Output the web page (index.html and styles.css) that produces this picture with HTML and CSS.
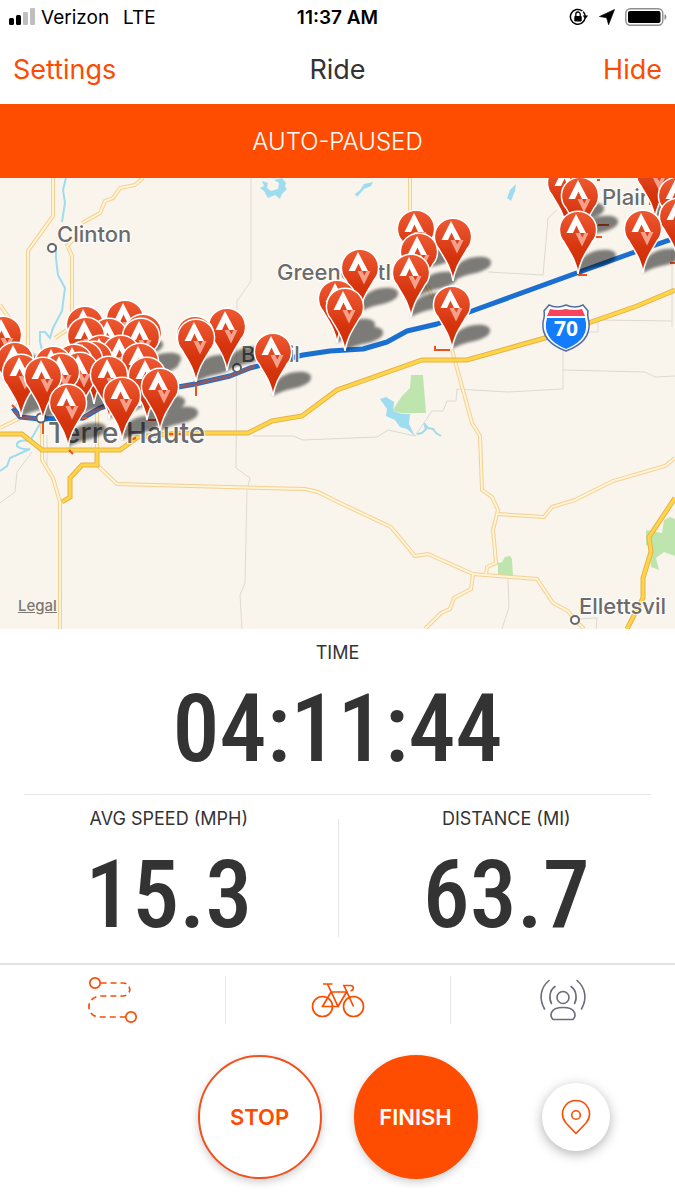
FILE: index.html
```html
<!DOCTYPE html>
<html lang="en">
<head>
  <meta charset="UTF-8">
  <meta name="viewport" content="width=device-width, initial-scale=1.0">
  <title>Ride</title>
  <link rel="stylesheet" href="styles.css">
</head>
<body>
  <div class="status-bar">
    <div class="carrier">
      <svg width="27" height="18" viewBox="0 0 27 18" aria-hidden="true">
        <rect x="1" y="10" width="5" height="7" rx="1.5"/>
        <rect x="8" y="7" width="5" height="10" rx="1.5"/>
        <rect x="15" y="4" width="5" height="13" rx="1" fill="#bfbfbf"/>
        <rect x="22" y="0" width="5" height="17" rx="1" fill="#bfbfbf"/>
      </svg>
      <span>Verizon</span>
      <span class="network">LTE</span>
    </div>
    <div class="clock">11:37 AM</div>
    <div class="status-icons">
      <svg width="20" height="18" viewBox="0 0 20 18" aria-hidden="true">
        <path d="M16.2 9.5A7.4 7.4 0 1 1 13.4 3" fill="none" stroke="#000" stroke-width="1.5"/>
        <path d="M14.2 3.8A7.4 7.4 0 0 1 16.3 8" fill="none" stroke="#000" stroke-width="1.5"/>
        <path d="M13.6 7.4h5.6l-2.8 3.6z"/>
        <rect x="5.3" y="8" width="7.4" height="5.4" rx="0.8"/>
        <path d="M6.8 8V6.2a2.2 2.2 0 0 1 4.4 0V8" fill="none" stroke="#000" stroke-width="1.3"/>
      </svg>
      <svg width="16" height="16" viewBox="0 0 16 16" aria-hidden="true">
        <path d="M15.6.4 9.6 15.800 7.600 8.800.4 7.500z" stroke="#000" stroke-width="0.6"/>
      </svg>
      <svg width="42" height="18" viewBox="0 0 42 18" aria-hidden="true">
        <rect x="0.8" y="0.8" width="37" height="16.4" rx="4.5" fill="none" stroke="#8e8e8e" stroke-width="1.4"/>
        <rect x="3" y="3" width="32.5" height="12" rx="2"/>
        <path d="M39.5 6v6q2-1 2-3t-2-3z" fill="#8e8e8e"/>
      </svg>
    </div>
  </div>

  <header class="nav">
    <a class="nav-link" href="#settings">Settings</a>
    <h1 class="nav-title">Ride</h1>
    <a class="nav-link nav-right" href="#hide">Hide</a>
  </header>

  <div class="banner">AUTO-PAUSED</div>

  <div class="map">
    <svg class="map-canvas" viewBox="0 178 675 451">
      <defs>
        <linearGradient id="pinFill" x1="0" y1="0" x2="0" y2="1">
          <stop offset="0" stop-color="#ee5a33"/>
          <stop offset="0.6" stop-color="#d6340d"/>
          <stop offset="1" stop-color="#cf2d05"/>
        </linearGradient>
        <filter id="soft" x="-10%" y="-10%" width="120%" height="120%">
          <feGaussianBlur stdDeviation="1.6"/>
        </filter>
        <g id="pin">
          <path d="M0 0C-2-14-8-21-14-32A18.6 18.6 0 1 1 14-32C8-21 2-14 0 0z" fill="url(#pinFill)" stroke="#fff" stroke-width="1.5"/>
          <path d="M-2-60 8-41H2L-1.5-48.500-5-41H-11.500z" fill="#fff"/>
          <path fill-rule="evenodd" d="M-2.500-41H10.500L4-27.500zM2-41 4.300-36.500 6.500-41z" fill="#f5a08a"/>
        </g>
        <path id="shadow" d="M0 0C1-8 2-17 12-21C21-25 37-26 38-19C39-13 28-9 18-7C10-5 5-3 0 0z"/>
      </defs>

      <!-- parks and water -->
      <g fill="#bfe5ae">
        <path d="M411 375h12l3 38h-24l-10-2 10-15 8-8z"/>
        <path d="M498 575v-12l4-1 3-5 5-1 2 3 1 17z"/>
        <path d="M646 530l16 3 2-13 6-3 5 2v37l-11-4-8 6 3 12-8-3-2-21-3-1z"/>
      </g>
      <g fill="#9edcf0">
        <path d="M380 399l6-2 8 5-1 9 9 3 8 0-1 10 6 12-8-7-7-2-5-7-9-4 1-7z"/>
        <path d="M262 181l6 2-1 5 4 3 7-2 1-6-5-3 8-2 4 5-1 4 2 2-5 5-2 5-5-4-7 3-4-7-4-3 4-2z"/>
        <path d="M355 194l5-4 4-6 9-2-2 4-7 3-7 8z"/>
        <path d="M507 198l3-8 6-6-1 7-4 10z"/>
      </g>
      <g class="river">
        <path d="M66 178l-3 12 2 13-3 19M56 245v13l2 17 7 13-3 23-9 17-3 10-5-6-5 0 0 10 2 8"/>
        <path d="M40 424l-10 17q-14-2-13 5 4 4 13 3l-20 9-3 8-7 5"/>
        <path d="M417 434l5-1 4-4-2-6 4 5 5 1 3 4 5 3"/>
      </g>

      <!-- county lines -->
      <g class="border">
        <path d="M251 178v103l-14 20-1 167 14 10-3 12-2 93-5 12 2 34"/>
        <path d="M253 436h40l10 4 74-3 11-7 27 6 17-25h11l4-10h9l1-12 51 3 55-3v-39M563 370l82 2 10 5 20-1"/>
        <path d="M590 332h8v-12l74 1M488 272l55 3 5-57 9-8M672 250v77"/>
        <path d="M508 579l1 28-7 22M577 619l20-1-1 11M32 452l-15 20-2 20-15 11M47 435v30"/>
      </g>

      <!-- secondary roads -->
      <g class="road-case">
        <path id="roads" d="M53 178v38L28 251v94M143 178l-8 7-15 3-7 10-8 3-5 12-18 10M68 247l4 9v74M67 330l-12 8M0 305l12 17M0 428l20-10M42 420v40l11 18 7 24v127M97 408v57l20 19 188 5 13 3 22 11 51 24 24 29 13-2 45 20 64 5 16 24 15 8 7 9 9 9M473 574l-2 15-17 9-4 11-9 4-16 16M452 350l20 73 8 13 2 54 10 7 6 13-5 20 3 33-9 4-1 8M498 514l46 3 8-10 23-7 38-19 52-15 10-8M410 178v37M427 285l6 13M66 247l8-8"/>
      </g>
      <use href="#roads" class="road-fill"/>

      <!-- highways -->
      <g class="highway-case">
        <path id="highways" d="M0 434h22l20 16h78l18-13 42-4h68l24-12 30-5 35-26 85-30h45l78-22 92-32 38-16M97 450v15H82L70 478v19l-8 5M675 498l-26 39 2 15-8 26v20l-16 31"/>
      </g>
      <use href="#highways" class="highway-fill"/>

      <!-- recorded route -->
      <path class="route" d="M13 408l7 9 20 2 43-1 17-10 50-16 45-8 35-8 20-8 53-13 27-4 33-2 24-7 20-11 30-7 35-13 160-58 43-15"/>
      <path class="route-overlap" d="M14 411l6 6 20 2M83 417l17-9 50-16 45-8 35-8 25-10"/>
      <path class="segment" d="M196 385v11M43 422v12M435 346v4h15M598 225h11M596 237h6M578 275h9M670 263h5M69 450l4 4M130 440l6-2M164 434h22M12 405l3 3M82 418h5M148 420h8M597 180h3"/>

      <g class="town">
        <circle cx="52" cy="248" r="4"/>
        <circle cx="41" cy="418" r="4.500"/>
        <circle cx="237" cy="368" r="4"/>
        <circle cx="575" cy="620" r="4"/>
      </g>

      <g class="town-name">
        <text x="57" y="242">Clinton</text>
        <text x="277" y="280">Greencastle</text>
        <text x="241" y="362">Brazil</text>
        <text x="602" y="205">Plain</text>
        <text x="579" y="614">Ellettsvil</text>
        <text x="48" y="443" class="city-name">Terre Haute</text>
      </g>

      <!-- interstate shield -->
      <g>
        <path d="M549 305q8 4 17 0 9 4 17 0l5 6q-1 4 1 11 2 20-23 29-25-9-23-29 2-7 1-11z" fill="#fff" stroke="#526da6" stroke-width="1.500"/>
        <path d="M550 309q8 2 16 0 8 2 16 0l3 7h-38z" fill="#f9435d"/>
        <path d="M547 318h38q6 21-19 31-25-10-19-31z" fill="#127cfa"/>
        <text x="566" y="336" class="shield-number">70</text>
      </g>

      <g id="shadows" filter="url(#soft)" fill="#000" opacity="0.5"></g>
      <g id="pins"></g>
    </svg>
    <a class="legal" href="#legal">Legal</a>
  </div>

  <main>
    <section class="stats">
      <div class="stat stat-time">
        <div class="stat-label">TIME</div>
        <div class="stat-value">04:11:44</div>
      </div>
      <div class="stat-row">
        <div class="stat">
          <div class="stat-label">AVG SPEED (MPH)</div>
          <div class="stat-value">15.3</div>
        </div>
        <div class="stat">
          <div class="stat-label">DISTANCE (MI)</div>
          <div class="stat-value">63.7</div>
        </div>
      </div>
    </section>

    <div class="tools">
      <button class="tool" aria-label="Routes">
        <svg width="52" height="48" viewBox="0 0 52 48" fill="none" stroke="currentColor" stroke-width="1.700">
          <circle cx="8" cy="7" r="5.200"/>
          <circle cx="44" cy="41" r="5.200"/>
          <path d="M13.500 7H36c9 0 9 13 0 13H14C-2 20-2 41 13 41h25.500" stroke-dasharray="6 4"/>
        </svg>
      </button>
      <button class="tool" aria-label="Sport">
        <svg width="54" height="36" viewBox="0 0 54 36" fill="none" stroke="currentColor" stroke-width="1.700">
          <circle cx="11.500" cy="24.500" r="10"/>
          <circle cx="42.500" cy="24.500" r="10"/>
          <path d="M12 2h9.500M16.500 2l10.500 22.500H11.500L20 10h15.500L27 24.500M42.500 24.500 33 3.500h6.500c4 0 3.500 5.500 0 5"/>
        </svg>
      </button>
      <button class="tool tool-muted" aria-label="Beacon">
        <svg width="48" height="42" viewBox="0 0 48 42" fill="none" stroke="currentColor" stroke-width="1.600" stroke-linecap="round">
          <circle cx="24" cy="18.500" r="6"/>
          <path d="M14 40.500h20c3-3 4-12-10-12s-13 9-10 12z"/>
          <path d="M16 7.500c-6 4-6 13-3.500 17M10 1.500C1 9 0 20 5.500 30M32 7.500c6 4 6 13 3.500 17M38 1.500c9 7.500 10 18.500 4.500 28.500"/>
        </svg>
      </button>
    </div>

    <div class="actions">
      <button class="round-button stop">STOP</button>
      <button class="round-button finish">FINISH</button>
      <button class="locate" aria-label="Show my location">
        <svg width="32" height="36" viewBox="0 0 32 36" fill="none" stroke="currentColor" stroke-width="1.600">
          <path d="M16 34.500 6 24C-2 14 5 1.500 16 1.500S34 14 26 24z" stroke-linejoin="round"/>
          <circle cx="16" cy="16" r="4.300"/>
        </svg>
      </button>
    </div>
  </main>

  <script src="script.js"></script>
</body>
</html>
```
FILE: styles.css
```css
* {
  box-sizing: border-box;
}
body {
  margin: 0;
  font-family: Inter, "Liberation Sans", sans-serif;
  color: #333;
  background-color: #fff;
}
button {
  padding: 0;
  border: none;
  background: none;
  font-family: inherit;
  color: #fc4c02;
  cursor: pointer;
}
svg {
  display: block;
}

/* Status bar */
.status-bar {
  display: grid;
  grid-template-columns: 1fr auto 1fr;
  align-items: center;
  height: 34px;
  padding: 0 8px;
  font-size: 19px;
  color: #000;
}
.carrier {
  display: flex;
  align-items: center;
  gap: 6px;
}
.network {
  margin-left: 8px;
}
.clock {
  font-weight: 600;
}
.status-icons {
  display: flex;
  align-items: center;
  justify-content: flex-end;
  gap: 10px;
}

/* Navigation */
.nav {
  display: grid;
  grid-template-columns: 1fr auto 1fr;
  align-items: center;
  height: 70px;
  padding: 0 13px;
  font-size: 27px;
}
.nav-link {
  color: #fc4c02;
  text-decoration: none;
}
.nav-right {
  text-align: right;
}
.nav-title {
  margin: 0;
  font-size: 27px;
  font-weight: 400;
}
.banner {
  padding: 23px 0 21px;
  background-color: #fe4d00;
  color: #fff;
  font-size: 24px;
  font-weight: 300;
  line-height: 30px;
  text-align: center;
}

/* Map */
.map {
  position: relative;
  background-color: #f9f5ed;
}
.map-canvas {
  width: 100%;
  height: auto;
}
.river {
  fill: none;
  stroke: #9edcf0;
  stroke-width: 2;
}
.border {
  fill: none;
  stroke: #dcd9d4;
  stroke-width: 1;
}
.road-case {
  fill: none;
  stroke: #f6cf92;
  stroke-width: 4;
}
.road-fill {
  fill: none;
  stroke: #fdf5d6;
  stroke-width: 2;
}
.highway-case {
  fill: none;
  stroke: #e9b04a;
  stroke-width: 5;
}
.highway-fill {
  fill: none;
  stroke: #fdd648;
  stroke-width: 3;
}
.route {
  fill: none;
  stroke: #1a6fd0;
  stroke-width: 5;
  stroke-linejoin: round;
}
.route-overlap {
  fill: none;
  stroke: #8c5a68;
  stroke-width: 3;
}
.segment {
  fill: none;
  stroke: #ec5120;
  stroke-width: 2;
}
.town {
  fill: #fff;
  stroke: #666;
  stroke-width: 2;
}
.town-name {
  font-size: 22px;
  font-weight: 500;
  fill: #6b6b6b;
  stroke: #fff;
  stroke-width: 2;
  paint-order: stroke;
}
.city-name {
  font-size: 28px;
}
.shield-number {
  fill: #fff;
  font-family: "Open Sans", sans-serif;
  font-size: 21px;
  font-weight: 700;
  text-anchor: middle;
}
.legal {
  position: absolute;
  left: 18px;
  bottom: 14px;
  font-size: 15px;
  font-weight: 500;
  color: #7b7874;
}

/* Stats */
.stat {
  text-align: center;
}
.stat-time {
  margin: 0 24px;
  padding: 12px 0 15px;
  border-bottom: 1px solid #e6e6e6;
}
.stat-label {
  font-size: 18px;
  line-height: 24px;
}
.stat-value {
  margin-top: 14px;
  font-family: "Roboto Condensed", Roboto, sans-serif;
  font-size: 94px;
  font-weight: 500;
  line-height: 100px;
}
.stat-row {
  display: grid;
  grid-template-columns: 1fr 1fr;
  padding: 12px 0 18px;
}
.stat-row .stat + .stat {
  background: linear-gradient(#e6e6e6, #e6e6e6) left 12px / 1px 118px no-repeat;
}

/* Tools */
.tools {
  display: grid;
  grid-template-columns: repeat(3, 1fr);
  padding: 11px 0;
  border-top: 2px solid #e2e2e2;
}
.tool {
  display: flex;
  align-items: center;
  justify-content: center;
  height: 48px;
}
.tool + .tool {
  border-left: 1px solid #e6e6e6;
}
.tool-muted {
  color: #6d6b7b;
}

/* Actions */
.actions {
  display: grid;
  grid-template-columns: 1fr auto auto 1fr;
  align-items: center;
  gap: 32px;
  padding: 20px 0;
}
.round-button {
  width: 124px;
  height: 124px;
  border: 2px solid #f2501c;
  border-radius: 50%;
  background-color: #fff;
  box-shadow: 0 3px 8px rgba(0, 0, 0, 0.2);
  font-size: 22px;
  font-weight: 600;
}
.stop {
  grid-column: 2;
}
.finish {
  border-color: #fe4d00;
  background-color: #fe4d00;
  color: #fff;
}
.locate {
  display: flex;
  align-items: center;
  justify-content: center;
  justify-self: center;
  width: 68px;
  height: 68px;
  margin-right: 32px;
  border-radius: 50%;
  background-color: #fff;
  box-shadow: 0 3px 12px rgba(0, 0, 0, 0.3);
}
```
FILE: script.js
```js
// Tip of each segment pin, back to front
const pins = [
  [566, 227], [580, 240], [655, 218], [677, 240], [678, 261],
  [578, 274], [643, 273],
  [416, 273], [453, 281], [419, 296], [411, 317],
  [360, 312], [337, 343], [345, 351], [452, 349],
  [125, 363], [85, 369], [227, 371], [195, 379], [196, 382],
  [109, 381], [143, 377], [141, 381], [86, 380], [3, 379],
  [273, 396], [101, 398], [121, 398], [94, 404], [84, 404],
  [15, 405], [74, 407], [53, 409], [140, 406],
  [80, 415], [61, 416], [21, 417], [109, 419], [147, 420], [43, 420],
  [160, 431], [122, 440], [68, 447],
];

function place(layer, shape) {
  const group = document.getElementById(layer);
  pins.forEach(([x, y]) => {
    const use = document.createElementNS('http://www.w3.org/2000/svg', 'use');
    use.setAttribute('href', shape);
    use.setAttribute('x', x);
    use.setAttribute('y', y);
    group.appendChild(use);
  });
}

place('shadows', '#shadow');
place('pins', '#pin');
```
